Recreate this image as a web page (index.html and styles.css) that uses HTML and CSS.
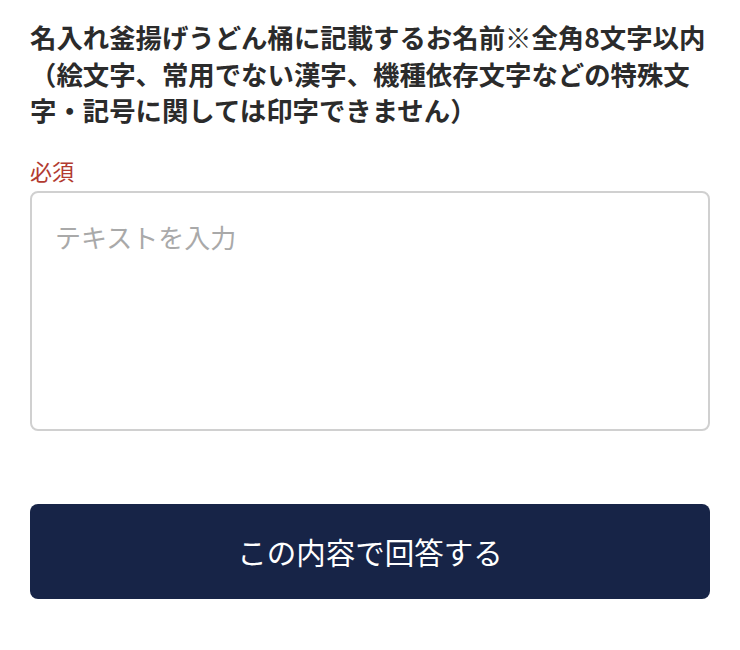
FILE: index.html
```html
<!DOCTYPE html>
<html lang="ja">
<head>
<meta charset="utf-8">
<link rel="stylesheet" href="styles.css">
</head>
<body>
<form class="form">
  <h1 class="question">名入れ釜揚げうどん桶に記載するお名前※全角8文字以内（絵文字、常用でない漢字、機種依存文字などの特殊文字・記号に関しては印字できません）</h1>
  <div class="required">必須</div>
  <textarea class="answer" placeholder="テキストを入力"></textarea>
  <button type="button" class="submit">この内容で回答する</button>
</form>
</body>
</html>
```
FILE: styles.css
```css
html, body {
  margin: 0;
  padding: 0;
  background: #ffffff;
}
body {
  font-family: "Noto Sans CJK JP", "Noto Sans", sans-serif;
  color: #2b2b2b;
}
.form {
  display: flex;
  flex-direction: column;
  padding: 19px 30px 0 30px;
}
.question {
  margin: 0;
  font-size: 26.4px;
  font-weight: 700;
  line-height: 36.5px;
  color: #2b2b2b;
}
.required {
  margin-top: 26px;
  font-size: 22px;
  line-height: 30px;
  color: #b23b30;
}
.answer {
  margin-top: 6px;
  box-sizing: border-box;
  height: 240px;
  width: 100%;
  border: 2px solid #d0d0d0;
  border-radius: 8px;
  padding: 26px 23px;
  font-family: "Noto Sans CJK JP", "Noto Sans", sans-serif;
  font-size: 26px;
  line-height: 36px;
  resize: none;
  outline: none;
  color: #333;
}
.answer::placeholder {
  color: #a9a9a9;
}
.submit {
  margin-top: 73px;
  height: 95px;
  width: 100%;
  border: none;
  border-radius: 8px;
  background: #172447;
  color: #ffffff;
  font-family: "Noto Sans CJK JP", "Noto Sans", sans-serif;
  font-size: 29.5px;
  font-weight: 400;
}
```
